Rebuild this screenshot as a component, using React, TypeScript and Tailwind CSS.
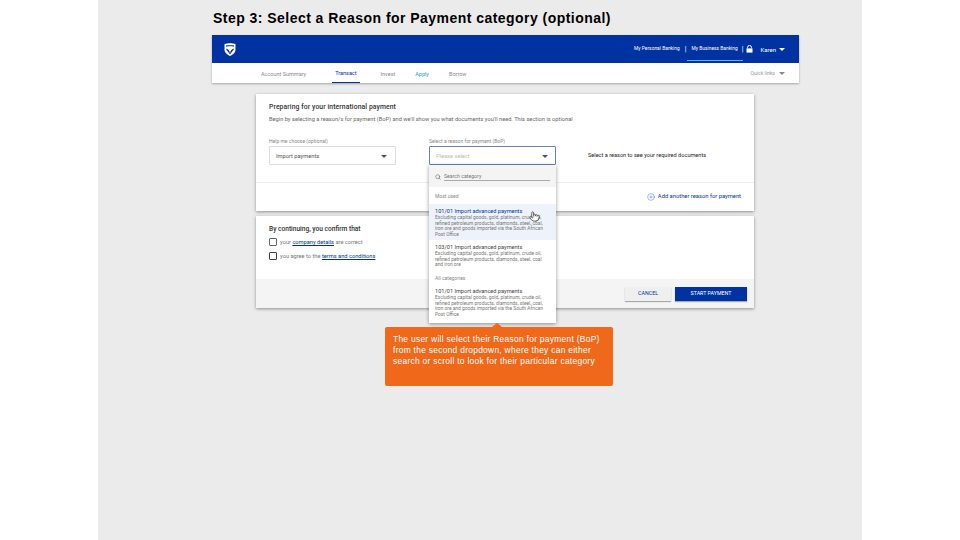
import React from "react";
import { CirclePlus, Pointer, Search } from "lucide-react";

const navItems = [
  { label: "Account Summary", className: "ml-[46px] text-[#8a8a8a]" },
  { label: "Transact", className: "ml-[23px] text-[#0033a1] border-b border-[#0033a1]" },
  { label: "Invest", className: "ml-[18px] text-[#8a8a8a]" },
  { label: "Apply", className: "ml-[14px] text-[#1c9ad6]" },
  { label: "Borrow", className: "ml-[14px] text-[#8a8a8a]" },
];

const Caret = ({ className }: { className: string }) => (
  <span
    className={`inline-block w-0 h-0 border-l-[3px] border-r-[3px] border-t-[3px] border-l-transparent border-r-transparent ${className}`}
  />
);

const Logo = () => (
  <svg width="12" height="13" viewBox="0 0 12 13">
    <path d="M0.5 1 C3.5 0 8.5 0 11.5 1 L11.5 6.5 C11.5 9.8 8.5 11.8 6 13 C3.5 11.8 0.5 9.8 0.5 6.5 Z" fill="#fff" />
    <path d="M2 2.6 C4.5 2 7.5 2 10 2.6 L10 3.8 C7.5 3.2 4.5 3.2 2 3.8 Z" fill="#0033a1" />
    <path d="M2.4 5.6 C4.4 6.2 5.6 7.8 6 10.4 C6.4 7.8 7.6 6.2 9.6 5.6 L9.6 7 C8.4 8 7.2 9.6 6 11.6 C4.8 9.6 3.6 8 2.4 7 Z" fill="#0033a1" />
  </svg>
);

const Category = ({
  active,
  code,
  body,
  className,
}: {
  active?: boolean;
  code: string;
  body: string;
  className: string;
}) => (
  <div className={`px-[6px] pt-[4px] ${className} ${active ? "bg-[#eef2fa]" : ""}`}>
    <div className={`text-[5.6px] leading-[7px] ${active ? "text-[#0033a1]" : "text-[#444]"}`}>
      {code} Import advanced payments
    </div>
    <div className="text-[4.9px] leading-[5.7px] text-[#777]">{body}</div>
  </div>
);

const longBody =
  "Excluding capital goods, gold, platinum, crude oil, refined petroleum products, diamonds, steel, coal, iron ore and goods imported via the South African Post Office";

const App: React.FC = () => {
  return (
    <div className="w-[960px] h-[540px] bg-white overflow-hidden font-['Roboto',sans-serif]">
      <div className="ml-[98px] w-[764px] h-[540px] bg-[#ebebeb] pl-[114px] relative">
        <h1 className="h-[35px] pt-[9px] ml-[1px] font-['Liberation_Sans',sans-serif] font-bold text-[14px] leading-[18px] tracking-[0.46px] text-black whitespace-nowrap">
          Step 3: Select a Reason for Payment category (optional)
        </h1>

        <div className="w-[587px] shadow-[0_1px_2px_rgba(0,0,0,0.3)]">
          <div className="h-[28px] bg-[#0033a1] flex items-center pl-[12px] pr-[14px]">
            <Logo />
            <div className="ml-auto flex items-center text-white text-[4.9px] whitespace-nowrap">
              <span>My Personal Banking</span>
              <span className="mx-[5px] text-[7px]">|</span>
              <span className="relative">
                My Business Banking
                <span className="absolute -left-[4px] -right-[5px] top-[15px] h-[1px] bg-[#5fb0e8]" />
              </span>
              <span className="ml-[4px] mr-[3px] text-[7px]">|</span>
              <svg width="7" height="8" viewBox="0 0 7 8">
                <path d="M1.6 3.4 V2.3 A1.9 1.9 0 0 1 5.4 2.3 V3.4" fill="none" stroke="#fff" strokeWidth="1" />
                <rect x="0.5" y="3.4" width="6" height="4.2" fill="#fff" />
              </svg>
              <span className="ml-[7px] pt-[1px] text-[6px]">Karen</span>
              <Caret className="ml-[3px] border-t-white" />
            </div>
          </div>
          <div className="h-[20px] bg-white flex items-center pr-[14px] text-[5.5px]">
            <div className="flex h-full">
              {navItems.map((item) => (
                <span key={item.label} className={`flex items-center pt-[2px] px-[3px] whitespace-nowrap ${item.className}`}>
                  {item.label}
                </span>
              ))}
            </div>
            <span className="ml-auto pt-[2px] text-[#999] text-[5.1px] whitespace-nowrap">Quick links</span>
            <Caret className="ml-[4px] mt-[1px] border-t-[#888]" />
          </div>
        </div>

        <div className="ml-[44px] w-[498px] mt-[11px]">
          <div className="bg-white h-[117px] shadow-[0_1px_3px_rgba(0,0,0,0.4)]">
            <div className="h-[89px] px-[13px] pt-[9px] border-b border-[#eee]">
              <div className="text-[6.8px] leading-[8px] font-medium tracking-[0.1px] text-[#333]">
                Preparing for your international payment
              </div>
              <div className="mt-[5px] text-[5.7px] leading-[7px] text-[#666] whitespace-nowrap">
                Begin by selecting a reason/s for payment (BoP) and we'll show you what documents you'll need. This section is optional
              </div>
              <div className="mt-[15px] flex items-start">
                <div className="w-[127px]">
                  <div className="text-[5px] leading-[6px] text-[#888]">Help me choose (optional)</div>
                  <div className="mt-[2px] h-[19px] border border-[#ddd] rounded-[1px] flex items-center pt-[1px] pl-[6px] pr-[8px] text-[5.7px] text-[#555]">
                    Import payments
                    <Caret className="ml-auto border-t-[#555]" />
                  </div>
                </div>
                <div className="ml-[33px] w-[127px] relative z-10">
                  <div className="text-[5px] leading-[6px] text-[#888]">Select a reason for payment (BoP)</div>
                  <div className="mt-[2px] h-[19px] border border-[#6b82b0] rounded-[1px] flex items-center pt-[1px] pl-[6px] pr-[7px] text-[5.7px] text-[#bbb] bg-white">
                    Please select
                    <Caret className="ml-auto border-t-[#555]" />
                  </div>
                  <div className="absolute left-0 top-[27px] w-[127px] h-[158px] bg-white shadow-[0_1px_4px_rgba(0,0,0,0.4)] overflow-hidden">
                    <div className="h-[22px] bg-[#f4f4f4] flex items-center pt-[1px] px-[6px]">
                      <Search size={6} className="text-[#555]" />
                      <span className="ml-[3px] flex-1 border-b border-[#aaa] text-[5.2px] leading-[7px] text-[#777]">
                        Search category
                      </span>
                    </div>
                    <div className="h-[17px] px-[6px] pt-[6px] text-[5px] leading-[6px] text-[#888]">Most used</div>
                    <Category active code="101/01" body={longBody} className="pb-[2px]" />
                    <Category
                      code="103/01"
                      body="Excluding capital goods, gold, platinum, crude oil, refined petroleum products, diamonds, steel, coal and iron ore"
                      className="pb-[3px]"
                    />
                    <div className="px-[6px] pt-[4px] pb-[3px] text-[5px] leading-[6px] text-[#888]">All categories</div>
                    <Category code="101/01" body={longBody} className="pb-[2px]" />
                    <Pointer size={11} strokeWidth={1.6} className="absolute left-[100px] top-[46px] text-[#333] fill-white" />
                  </div>
                </div>
                <div className="ml-[32px] mt-[14px] text-[5.6px] leading-[7px] text-[#222] whitespace-nowrap">
                  Select a reason to see your required documents
                </div>
              </div>
            </div>
            <div className="h-[27px] flex items-center justify-end pr-[13px] text-[5.8px] text-[#0033a1]">
              <CirclePlus size={8} strokeWidth={1} className="mr-[3px]" />
              Add another reason for payment
            </div>
          </div>

          <div className="mt-[5px] bg-white h-[92px] shadow-[0_1px_3px_rgba(0,0,0,0.4)]">
            <div className="h-[63px] px-[13px] pt-[9px]">
              <div className="text-[6.6px] leading-[8px] font-medium text-[#333]">By continuing, you confirm that</div>
              <div className="mt-[5px] flex items-center text-[5.7px] text-[#777]">
                <span className="w-[8px] h-[8px] border border-[#666] rounded-[1px] mr-[3px]" />
                <span>
                  your <span className="text-[#0033a1] underline">company details</span> are correct
                </span>
              </div>
              <div className="mt-[5px] flex items-center text-[5.7px] text-[#777]">
                <span className="w-[8px] h-[8px] border border-[#444] rounded-[1px] mr-[3px]" />
                <span>
                  you agree to the <span className="text-[#0033a1] underline">terms and conditions</span>
                </span>
              </div>
            </div>
            <div className="h-[29px] bg-[#f4f4f4] flex items-center justify-end gap-[4px] pr-[7px]">
              <div className="w-[46px] h-[14px] bg-[#efefef] shadow-[0_1px_1px_rgba(0,0,0,0.3)] flex items-center justify-center text-[5.3px] text-[#0033a1]">
                CANCEL
              </div>
              <div className="w-[72px] h-[14px] bg-[#0033a1] shadow-[0_1px_1px_rgba(0,0,0,0.3)] flex items-center justify-center text-[5.3px] text-white">
                START PAYMENT
              </div>
            </div>
          </div>
        </div>

        <div className="absolute left-[287px] top-[327px] w-[228px] h-[59px] bg-[#f0691a] rounded-[2px] pl-[8px] pt-[7px] font-['Liberation_Sans',sans-serif] text-[8.4px] leading-[11px] tracking-[0.3px] text-white z-20">
          <span className="absolute left-[107px] -top-[4px] w-0 h-0 border-l-[5px] border-r-[5px] border-b-[4px] border-l-transparent border-r-transparent border-b-[#f0691a]" />
          The user will select their Reason for payment (BoP)
          <br />
          from the second dropdown, where they can either
          <br />
          search or scroll to look for their particular category
        </div>
      </div>
    </div>
  );
};

export default App;
